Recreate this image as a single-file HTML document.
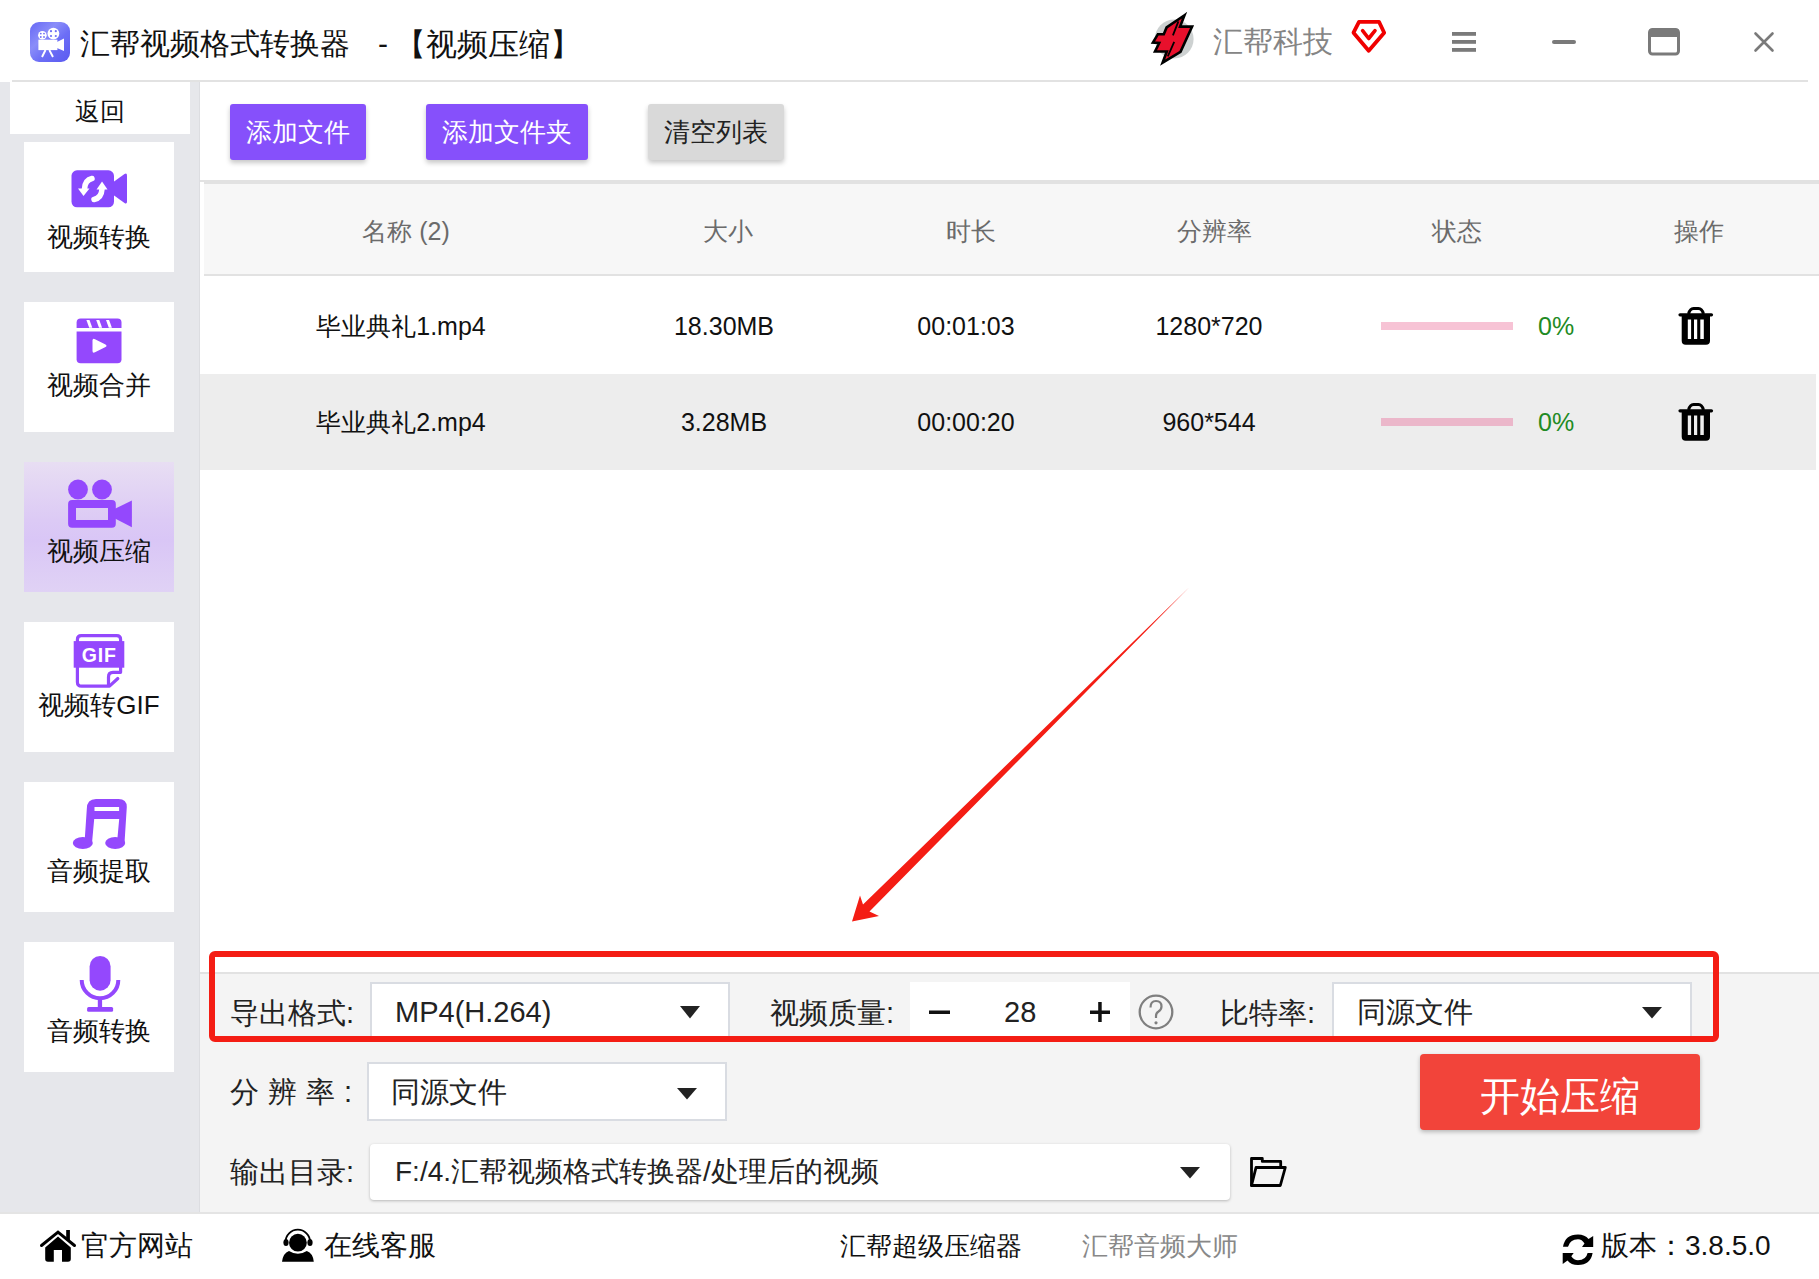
<!DOCTYPE html>
<html><head><meta charset="utf-8">
<style>
*{margin:0;padding:0;box-sizing:border-box}
html,body{width:1819px;height:1279px;overflow:hidden;background:#fff;font-family:"Liberation Sans",sans-serif;color:#1a1a1a}
.a{position:absolute}
.t{position:absolute;white-space:nowrap;line-height:1}
.c{text-align:center}
.nav{position:absolute;left:24px;width:150px;height:130px;background:#fff}
.nt{position:absolute;left:24px;width:150px;text-align:center;font-size:26px;line-height:1;color:#111;white-space:nowrap}
.btn{position:absolute;top:104px;height:56px;border-radius:3px;box-shadow:0 3px 5px rgba(0,0,0,.22);font-size:26px;line-height:56px;text-align:center;color:#fff;background:#8650fb}
.hd{position:absolute;top:219px;font-size:25px;line-height:1;color:#6b6b6b;text-align:center;width:240px;white-space:nowrap}
.cell{position:absolute;font-size:25px;line-height:1;color:#111;text-align:center;width:240px;white-space:nowrap}
.lbl{position:absolute;font-size:29px;line-height:1;color:#222;white-space:nowrap}
.sel{position:absolute;background:#fff;border:2px solid #d9dce2}
.stx{position:absolute;font-size:29px;line-height:1;color:#222;white-space:nowrap}
.ft{position:absolute;top:1232px;font-size:28px;line-height:1;color:#111;white-space:nowrap}
</style></head><body>
<!-- title bar -->
<div class="a" style="left:12px;top:80px;width:1796px;height:2px;background:#e2e2e2"></div>
<div class="a" style="left:30px;top:22px;width:40px;height:40px;border-radius:9px;background:linear-gradient(135deg,#6668f5 0%,#8a8df9 35%,#6c6ef6 60%,#5a5af0 100%)"></div>
<div class="t" style="left:80px;top:29px;font-size:30px;color:#111">汇帮视频格式转换器</div>
<div class="t" style="left:378px;top:29px;font-size:30px;color:#111">-</div>
<div class="t" style="left:395px;top:28.5px;font-size:30.5px;color:#111">【视频压缩】</div>
<div class="t" style="left:1213px;top:27px;font-size:30px;color:#858585">汇帮科技</div>

<!-- sidebar -->
<div class="a" style="left:0;top:82px;width:200px;height:1131px;background:#e6e7eb"></div>
<div class="a" style="left:199px;top:82px;width:1px;height:1131px;background:#dcdde1"></div>
<div class="a" style="left:10px;top:82px;width:180px;height:52px;background:#fff"></div>
<div class="t" style="left:75px;top:99px;font-size:25px;color:#111">返回</div>

<div class="nav" style="top:142px"></div>
<div class="nav" style="top:302px"></div>
<div class="nav" style="top:462px;background:linear-gradient(180deg,#e8def3 0%,#dccaf5 45%,#d9c6f6 60%,#e0d2f5 100%)"></div>
<div class="nav" style="top:622px"></div>
<div class="nav" style="top:782px"></div>
<div class="nav" style="top:942px"></div>
<div class="nt" style="top:224px">视频转换</div>
<div class="nt" style="top:372px">视频合并</div>
<div class="nt" style="top:538px">视频压缩</div>
<div class="nt" style="top:692px">视频转GIF</div>
<div class="nt" style="top:858px">音频提取</div>
<div class="nt" style="top:1018px">音频转换</div>

<!-- toolbar -->
<div class="btn" style="left:230px;width:136px">添加文件</div>
<div class="btn" style="left:426px;width:162px">添加文件夹</div>
<div class="btn" style="left:648px;width:136px;background:#d9d9d9;color:#222">清空列表</div>

<!-- table -->
<div class="a" style="left:200px;top:180px;width:1619px;height:2px;background:#e2e2e2"></div>
<div class="a" style="left:204px;top:182px;width:1615px;height:94px;background:#f7f7f7;border-top:2px solid #e2e2e2;border-bottom:2px solid #e2e2e2"></div>
<div class="a" style="left:200px;top:374px;width:1616px;height:96px;background:#ededed"></div>
<div class="hd" style="left:286px">名称 (2)</div>
<div class="hd" style="left:608px">大小</div>
<div class="hd" style="left:851px">时长</div>
<div class="hd" style="left:1094px">分辨率</div>
<div class="hd" style="left:1337px">状态</div>
<div class="hd" style="left:1579px">操作</div>

<div class="cell" style="left:281px;top:314px">毕业典礼1.mp4</div>
<div class="cell" style="left:604px;top:314px">18.30MB</div>
<div class="cell" style="left:846px;top:314px">00:01:03</div>
<div class="cell" style="left:1089px;top:314px">1280*720</div>
<div class="cell" style="left:281px;top:410px">毕业典礼2.mp4</div>
<div class="cell" style="left:604px;top:410px">3.28MB</div>
<div class="cell" style="left:846px;top:410px">00:00:20</div>
<div class="cell" style="left:1089px;top:410px">960*544</div>
<div class="a" style="left:1381px;top:322px;width:132px;height:8px;background:#f7c3d5"></div>
<div class="a" style="left:1381px;top:418px;width:132px;height:8px;background:#ebb7ca"></div>
<div class="t" style="left:1538px;top:314px;font-size:25px;color:#1f8b24">0%</div>
<div class="t" style="left:1538px;top:410px;font-size:25px;color:#1f8b24">0%</div>

<!-- bottom panel -->
<div class="a" style="left:200px;top:972px;width:1619px;height:241px;background:#f4f4f4;border-top:2px solid #e2e2e2"></div>
<div class="a" style="left:0;top:1212px;width:1819px;height:2px;background:#e4e4e4"></div>

<div class="lbl" style="left:230px;top:998.5px">导出格式:</div>
<div class="sel" style="left:370px;top:982px;width:360px;height:60px"></div>
<div class="stx" style="left:395px;top:998px">MP4(H.264)</div>
<div class="lbl" style="left:770px;top:998.5px">视频质量:</div>
<div class="a" style="left:910px;top:982px;width:220px;height:60px;background:#fff"></div>
<div class="stx" style="left:1004px;top:998px">28</div>
<div class="lbl" style="left:1220px;top:998.5px">比特率:</div>
<div class="sel" style="left:1332px;top:982px;width:360px;height:60px"></div>
<div class="stx" style="left:1357px;top:998px">同源文件</div>

<div class="lbl" style="left:230px;top:1078px;letter-spacing:9px">分辨率:</div>
<div class="sel" style="left:367px;top:1062px;width:360px;height:59px"></div>
<div class="stx" style="left:391px;top:1078px">同源文件</div>

<div class="a" style="left:1420px;top:1054px;width:280px;height:76px;background:#f2443a;border-radius:4px;box-shadow:0 2px 4px rgba(0,0,0,.25)"></div>
<div class="t" style="left:1420px;top:1076px;width:280px;text-align:center;font-size:40px;color:#fff">开始压缩</div>

<div class="lbl" style="left:230px;top:1158px">输出目录:</div>
<div class="a" style="left:370px;top:1144px;width:860px;height:56px;background:#fff;border-radius:4px;box-shadow:0 1px 3px rgba(0,0,0,.25)"></div>
<div class="stx" style="left:395px;top:1158px;font-size:28px">F:/4.汇帮视频格式转换器/处理后的视频</div>

<!-- footer -->
<div class="ft" style="left:81px">官方网站</div>
<div class="ft" style="left:324px">在线客服</div>
<div class="ft" style="left:840px;font-size:26px;top:1233px">汇帮超级压缩器</div>
<div class="ft" style="left:1082px;font-size:26px;top:1233px;color:#888">汇帮音频大师</div>
<div class="ft" style="left:1601px">版本：3.8.5.0</div>

<svg class="a" style="left:0;top:0" width="1819" height="1279" viewBox="0 0 1819 1279">
<!-- red annotation -->
<rect x="212" y="954" width="1504" height="85" rx="3" fill="none" stroke="#f41d14" stroke-width="6"/>
<polygon points="1189,587.5 869.5,911.5 879,916 852,921.5 860,895.5 863,904.5" fill="#f41d14"/>

<!-- app icon -->
<g fill="#fff">
<circle cx="42.4" cy="35.2" r="4.3"/><circle cx="53.4" cy="33.6" r="5.9"/>
<rect x="38.4" y="39.7" width="19" height="10.4"/><polygon points="57,42 64,38.6 64,51 57,47.9"/>
</g>
<g fill="#6e70f5">
<circle cx="40.8" cy="33.6" r="0.9"/><circle cx="44" cy="33.6" r="0.9"/><circle cx="40.8" cy="37" r="0.9"/><circle cx="44" cy="37" r="0.9"/>
<circle cx="51" cy="31.2" r="1.1"/><circle cx="55.8" cy="31.2" r="1.1"/><circle cx="51" cy="36" r="1.1"/><circle cx="55.8" cy="36" r="1.1"/>
</g>
<path d="M45.5,50 L42,57 M49.3,50 L53,57" stroke="#fff" stroke-width="1.9"/>

<!-- title right icons -->
<circle cx="1174.2" cy="39" r="19.4" fill="#cdd1d1"/>
<polygon points="1184.5,15.2 1166.6,27.4 1163.8,34.2 1157.9,34.2 1152.9,42.6 1159.2,43 1155,51.5 1166.8,51.5 1162.6,62.7 1180.5,51.9 1192.1,26.6 1180.1,26.6" fill="#e8102c" stroke="#000" stroke-width="2.6" stroke-linejoin="miter"/>
<path d="M1178.4,21.3 L1172.9,35.4 M1174.2,41.8 L1167.8,56.3" stroke="#000" stroke-width="1.8"/>
<path d="M1359,21.8 H1379 L1384.2,32.7 L1368.7,50.8 L1353.5,32.7 Z" fill="none" stroke="#f00000" stroke-width="3.8" stroke-linejoin="round"/>
<path d="M1362.6,30.7 L1368.7,38.5 L1375,30.7" fill="none" stroke="#f00000" stroke-width="3.6" stroke-linecap="round" stroke-linejoin="round"/>
<g fill="#7a7a7a">
<rect x="1452" y="32" width="24" height="3.8"/><rect x="1452" y="40" width="24" height="3.8"/><rect x="1452" y="48" width="24" height="3.8"/>
<rect x="1552" y="40" width="24" height="4" rx="2"/>
</g>
<rect x="1649.5" y="29.5" width="29" height="24.5" rx="3" fill="none" stroke="#7a7a7a" stroke-width="3"/>
<rect x="1649" y="29" width="30" height="8" rx="2" fill="#7a7a7a"/>
<path d="M1755.5,33.5 L1772.5,50.5 M1772.5,33.5 L1755.5,50.5" stroke="#7a7a7a" stroke-width="2.6" stroke-linecap="round"/>

<!-- nav icons -->
<g fill="#8748fd">
<rect x="71.5" y="170.3" width="42.5" height="37" rx="5.5"/>
<path d="M112,183 L124.5,174 Q127,172.5 127,175.5 V201.5 Q127,204.5 124.5,203 L112,194 Z"/>
</g>
<g fill="none" stroke="#fff" stroke-width="5.5" stroke-linecap="round">
<path d="M92,178.5 Q85,180 84.5,189"/>
<path d="M94,199.5 Q101.5,198 102,189"/>
</g>
<g fill="#fff">
<polygon points="78,188.5 89.5,188.5 83.5,196"/>
<polygon points="96.5,189.5 107.5,189.5 102,181.5"/>
</g>

<g fill="#9448fd">
<path d="M76.6,328 V322.5 Q76.6,318.4 80.6,318.4 H117.5 Q121.5,318.4 121.5,322.5 V328 Z"/>
<path d="M76.6,331.4 H121.5 V359.3 Q121.5,363.3 117.5,363.3 H80.6 Q76.6,363.3 76.6,359.3 Z"/>
</g>
<g fill="#fff">
<polygon points="86.4,320 89.5,320 92.3,327.8 89.2,327.8"/>
<polygon points="96.2,320 99.3,320 102.1,327.8 99,327.8"/>
<polygon points="106,320 109.1,320 111.9,327.8 108.8,327.8"/>
<path d="M92.5,340.5 Q92.5,338 95,339.2 L105.5,344.5 Q107.5,345.8 105.5,347 L95,352.3 Q92.5,353.5 92.5,351 Z"/>
</g>

<g fill="#9448fd">
<circle cx="78" cy="489.5" r="9.9"/><circle cx="102" cy="489.5" r="9.9"/>
<path fill-rule="evenodd" d="M72.1,500 H111.8 Q115.8,500 115.8,504 V523.7 Q115.8,527.7 111.8,527.7 H72.1 Q68.1,527.7 68.1,523.7 V504 Q68.1,500 72.1,500 Z M76,508 V520 H108 V508 Z"/>
<polygon points="114.5,509 131.9,500.4 131.9,527.2 114.5,518.2"/>
</g>

<g fill="none" stroke="#9448fd" stroke-width="3.2" stroke-linejoin="round">
<path d="M77.4,642 V639.5 Q77.4,635.6 81.3,635.6 H116.7 Q120.6,635.6 120.6,639.5 V642"/>
<path d="M77.4,667 V682 Q77.4,686.2 81.6,686.2 H109.5 L117.8,678.5" stroke-linecap="round"/>
<path d="M120.6,667 V672.3 H113 Q108.5,672.3 108.5,677 V685"/>
</g>
<rect x="73.7" y="641.1" width="50.6" height="26.6" fill="#9448fd"/>
<text x="99.2" y="662" font-size="19.5" font-weight="bold" fill="#fff" text-anchor="middle" font-family="Liberation Sans" letter-spacing="0.8">GIF</text>

<g fill="#9448fd">
<path d="M86.8,809 Q86.8,799 96,799 H118.5 Q126.8,799 126.8,807 L124.5,843 H117 L119.2,819 H94.2 L92,843 H84.5 Z"/>
<ellipse cx="82.8" cy="843" rx="10" ry="6"/>
<ellipse cx="115.2" cy="843" rx="10" ry="6"/>
</g>
<rect x="94.5" y="807" width="24.6" height="4" fill="#fff"/>

<g fill="#9448fd">
<rect x="89.6" y="956" width="21" height="34.7" rx="10.5"/>
<rect x="97.8" y="999" width="4.3" height="9"/>
<rect x="87.1" y="1007" width="26" height="4.8" rx="1.5"/>
</g>
<path d="M81.7,980 A18.3,18.3 0 0 0 118.3,980" fill="none" stroke="#9448fd" stroke-width="4"/>

<!-- trash icons -->
<g id="tr">
<path d="M1680,314.8 H1711.5" stroke="#000" stroke-width="3.2" stroke-linecap="round"/>
<path d="M1688.5,314 Q1690,308.5 1693.5,308.5 H1698.5 Q1702,308.5 1703.5,314" fill="none" stroke="#000" stroke-width="3"/>
<path fill-rule="evenodd" d="M1681.7,315 H1710 V340.8 Q1710,344.8 1706,344.8 H1685.7 Q1681.7,344.8 1681.7,340.8 Z M1687.8,319.5 V338.9 H1691.1 V319.5 Z M1694,319.5 V338.9 H1697.2 V319.5 Z M1700.3,319.5 V338.9 H1703.8 V319.5 Z"/>
</g>
<use href="#tr" transform="translate(0,96)"/>

<!-- dropdown triangles -->
<g fill="#222">
<polygon points="680,1006 700,1006 690,1018.5"/>
<polygon points="1642,1007 1662,1007 1652,1018.5"/>
<polygon points="677,1088 697,1088 687,1099.5"/>
<polygon points="1180,1167 1200,1167 1190,1178.6"/>
</g>
<!-- stepper -->
<rect x="929" y="1010.5" width="21" height="3.5" fill="#111"/>
<rect x="1090" y="1010.5" width="20" height="3.5" fill="#111"/>
<rect x="1098.2" y="1002" width="3.5" height="20" fill="#111"/>
<circle cx="1156" cy="1012" r="16.3" fill="none" stroke="#7f7f7f" stroke-width="2.3"/>
<path d="M1150.5,1007.5 Q1150.5,1001 1156,1001 Q1161.5,1001 1161.5,1006.5 Q1161.5,1009.5 1158.5,1011.5 Q1156,1013 1156,1016 V1018" fill="none" stroke="#7f7f7f" stroke-width="2.2"/><circle cx="1156" cy="1022.8" r="1.6" fill="#7f7f7f"/>

<!-- folder -->
<g fill="none" stroke="#000" stroke-width="2.8" stroke-linejoin="round">
<path d="M1256,1185.5 H1251.5 V1158.5 H1262.3 V1161.4 H1280.7 V1166.5"/>
<path d="M1251.5,1185.5 L1256,1167.5 H1285.3 L1280.3,1185.5 Z"/>
</g>

<!-- footer icons -->
<path d="M41.5,1245.5 L58,1232.2 L74.5,1245.5" fill="none" stroke="#000" stroke-width="3" stroke-linecap="round"/>
<rect x="66.2" y="1230" width="3.7" height="10" fill="#000"/>
<path d="M45.2,1247.5 L58,1236.5 L70.8,1247.5 V1259 Q70.8,1261.8 68,1261.8 H62 V1250 H53.8 V1261.8 H48 Q45.2,1261.8 45.2,1259 Z" fill="#000"/>

<path d="M285.5,1242 A12.3,12.3 0 0 1 310.1,1242" fill="none" stroke="#000" stroke-width="1.8"/>
<ellipse cx="286" cy="1242.5" rx="2.6" ry="3.6" fill="#000"/>
<ellipse cx="310" cy="1242.5" rx="2.6" ry="3.6" fill="#000"/>
<circle cx="297.9" cy="1242.7" r="8.9" fill="#000"/>
<path d="M282,1261.8 Q283,1253 289,1250.9 Q297.9,1256.5 306.8,1250.9 Q313,1253 313.8,1261.8 Z" fill="#000"/>

<g fill="#000">
<path d="M1563,1246.7 Q1565,1234.4 1578,1234.4 Q1585,1234.4 1588.5,1239 L1593.2,1236 V1247 H1582 L1584.5,1243.5 Q1582,1239.2 1578,1239.2 Q1570,1239.2 1568,1246.7 Z"/>
<path d="M1592.6,1253 Q1590.6,1265 1578,1265 Q1571,1265 1567.5,1260.5 L1562.7,1264 V1253 H1573.7 L1571.3,1256.3 Q1574,1260.2 1578,1260.2 Q1586,1260.2 1587.6,1253 Z"/>
</g>
</svg>
</body></html>
